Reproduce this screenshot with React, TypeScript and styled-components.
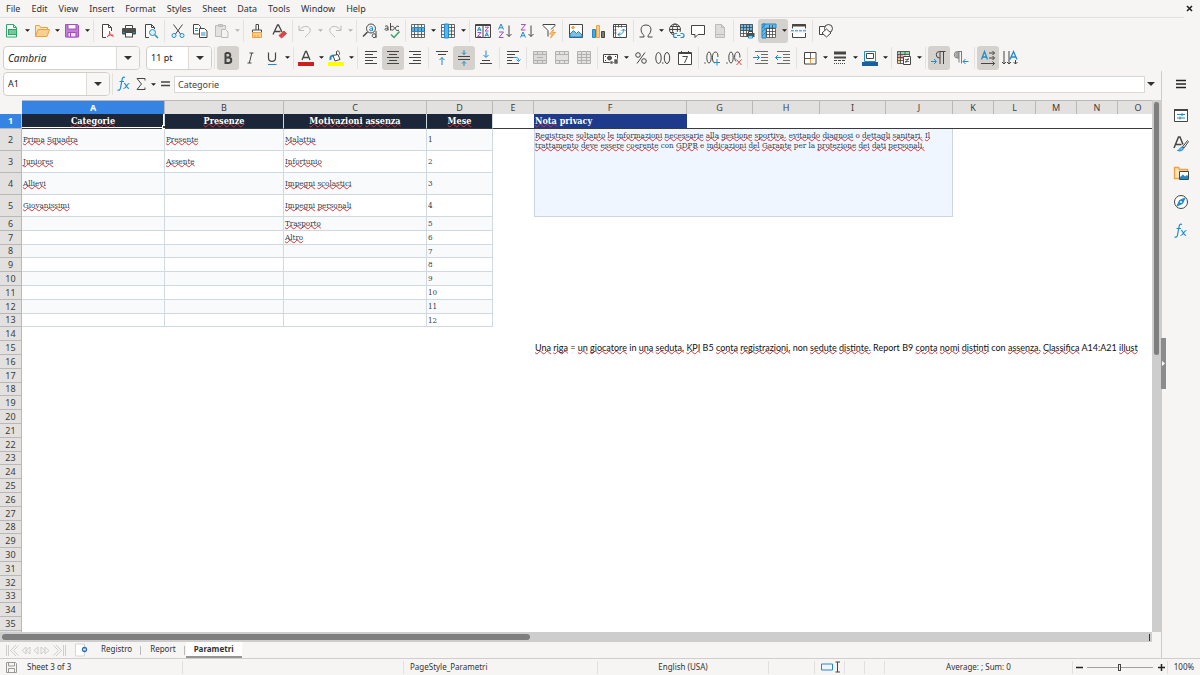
import React from "react";
import styled, { createGlobalStyle, css } from "styled-components";

const INK = "#454543";
const BLUE = "#1e8bcd";
const GREEN = "#2fa866";
const ORANGE = "#f0a13c";
const PURPLE = "#a44fbf";
const RED = "#e0433f";
const GREY = "#bdbbb8";
const UI = `"Noto Sans", "Open Sans", sans-serif`;
const SERIF = `"DejaVu Serif Condensed", "DejaVu Serif", serif`;

const Global = createGlobalStyle`
  *, *::before, *::after { box-sizing: border-box; }
  body { margin: 0; background: #f6f5f4; color: #333; font: 9px/12px ${UI}; overflow: hidden; }
  button, input { font: inherit; color: inherit; margin: 0; padding: 0; border: 0; background: none; }
  ul { list-style: none; margin: 0; padding: 0; }
`;

/* ---------- shell ---------- */
const Window = styled.div`
  display: flex;
  flex-direction: column;
  height: 100vh;
`;
const MenuBar = styled.nav`
  display: flex;
  align-items: center;
  height: 17px;
  padding: 0 6px;
`;
const MenuList = styled.ul`
  display: flex;
  gap: 11px;
  flex: 1;
`;
const MenuButton = styled.button`
  display: block;
`;
const CloseButton = styled.button`
  display: grid;
  place-items: center;
  width: 10px;
  height: 10px;
`;
const Toolbar = styled.div`
  display: flex;
  align-items: center;
  height: 27px;
`;
const MainToolbar = styled(Toolbar)`
  border-top: 1px solid #e3e1df;
  margin-right: 16px;
  padding: 0 0 1px 1px;
`;
const Separator = styled.span<{ $thin?: boolean }>`
  display: flex;
  justify-content: center;
  flex: none;
  width: ${(p) => (p.$thin ? 4 : 5)}px;
  height: 22px;
  &::before {
    content: "";
    width: 1px;
    background: #e4e2e0;
  }
`;
const activeTool = css`
  background: #d5d1cd;
`;
const ToolGroup = styled.span<{ $active?: boolean }>`
  display: flex;
  flex: none;
  border-radius: 3px;
  ${(p) => p.$active && activeTool}
`;
const ToolButton = styled.button<{ $active?: boolean }>`
  display: grid;
  place-items: center;
  flex: none;
  width: 22px;
  height: 24px;
  border-radius: 3px;
  ${(p) => p.$active && activeTool}
`;
const DropButton = styled.button<{ $dim?: boolean }>`
  display: grid;
  place-items: center;
  flex: none;
  width: 8px;
  height: 24px;
  color: ${(p) => (p.$dim ? "#b5b3b0" : "#1c1c1c")};
`;
const Combo = styled.div<{ $width: number }>`
  display: flex;
  flex: none;
  width: ${(p) => p.$width}px;
  height: 24px;
  border: 1px solid #d2cfcb;
  border-radius: 4px;
  background: #fff;
  overflow: hidden;
`;
const ComboInput = styled.input<{ $italic?: boolean }>`
  flex: 1;
  min-width: 0;
  padding: 0 4px;
  font-size: ${(p) => (p.$italic ? 10 : 9)}px;
  font-style: ${(p) => (p.$italic ? "italic" : "normal")};
  color: #222;
`;
const ComboArrow = styled.button`
  display: grid;
  place-items: center;
  width: 23px;
  border-left: 1px solid #dddad7;
  background: #f8f7f6;
`;
const ComboArrowPlain = styled.button`
  display: grid;
  place-items: center;
  width: 12px;
  height: 20px;
`;
const FormatToolbar = styled(Toolbar)`
  padding-left: 3px;
`;
const ComboGap = styled.span`
  flex: none;
  width: 6px;
`;

/* ---------- body ---------- */
const Body = styled.div`
  display: flex;
  flex: 1;
  min-height: 0;
`;
const Work = styled.div`
  display: flex;
  flex-direction: column;
  flex: 1;
  min-width: 0;
`;
const FormulaBar = styled.div`
  display: flex;
  align-items: center;
  height: 29px;
  padding: 0 4px 3px 3px;
`;
const FormulaInput = styled.input`
  flex: 1;
  min-width: 0;
  height: 17px;
  padding: 0 3px;
  border: 1px solid #dad8d6;
  background: #fff;
  color: #444;
`;
const SmallTool = styled.button`
  display: grid;
  place-items: center;
  width: 17px;
  height: 22px;
`;
const GridArea = styled.div`
  display: flex;
  flex: 1;
  min-height: 0;
`;
const Viewport = styled.div`
  flex: 1;
  min-width: 0;
  overflow: hidden;
  background: #fff;
`;
const Sheet = styled.table`
  width: 1159px;
  table-layout: fixed;
  border-collapse: separate;
  border-spacing: 0;
`;
const Row = styled.tr<{ $h: number }>`
  height: ${(p) => p.$h}px;
`;
const Corner = styled.td`
  padding: 0;
  background: #f6f5f4;
`;
const HeadCell = styled.th<{ $on?: boolean }>`
  padding: 0;
  font-weight: ${(p) => (p.$on ? 700 : 400)};
  color: ${(p) => (p.$on ? "#fff" : "#3c3c3c")};
  background: ${(p) => (p.$on ? "#3584e4" : "#e3e1df")};
  border: 0 solid #bab8b6;
  line-height: 12px;
`;
const ColHead = styled(HeadCell)`
  border-width: 1px 1px 0 0;
`;
const RowHead = styled(HeadCell)`
  border-width: 0 1px 1px 0;
`;
const Cell = styled.td`
  padding: 0;
  font: 8px/10px ${SERIF};
  color: #333d4b;
  white-space: nowrap;
`;
const TableCell = styled(Cell)<{ $band: boolean }>`
  padding: 1px 0 0 1px;
  background: ${(p) => (p.$band ? "#f8fafc" : "#fff")};
  border: 0 solid #d1d9e0;
  border-width: 0 1px 1px 0;
`;
const TitleCell = styled(Cell)<{ $selected?: boolean }>`
  position: relative;
  font: bold 9px/12px ${SERIF};
  text-align: center;
  color: #fff;
  background: #1b2638;
  border-right: 1px solid #d1d9e0;
  border-bottom: 1px solid #3b3b3b;
  ${(p) => p.$selected && css`box-shadow: inset -1px -1px 0 #fff;`}
`;
const FillHandle = styled.span`
  position: absolute;
  right: -2px;
  bottom: -1px;
  width: 4px;
  height: 4px;
  background: #3b3b3b;
  border: 1px solid #fff;
`;
const FrozenCell = styled(Cell)`
  border-bottom: 1px solid #3b3b3b;
`;
const NoteTitle = styled(FrozenCell)`
  padding-left: 1px;
  font: bold 9px/12px ${SERIF};
  color: #fff;
  background: #1e3a8a;
`;
const NoteCell = styled(Cell)`
  padding: 2px 0 0;
  vertical-align: top;
  background: #eff6ff;
  border: 0 solid #cdd6e0;
  border-width: 0 1px 1px 1px;
`;
const PlainCell = styled(Cell)`
  padding-left: 1px;
  font: 9px/12px Lato, "Open Sans", sans-serif;
  color: #111;
`;
const Misspelt = styled.span`
  text-decoration: underline wavy #e03030 1px;
  text-decoration-skip-ink: none;
  text-underline-offset: -1px;
`;

const VScroll = styled.div`
  width: 9px;
  padding: 2px 2px;
  background: #cdcdcd;
`;
const VThumb = styled.div`
  height: 48%;
  border-radius: 3px;
  background: #7e7e7e;
`;
const HScroll = styled.div`
  display: flex;
  align-items: center;
  height: 10px;
  margin-right: 9px;
  padding: 0 2px;
  background: #cdcdcd;
`;
const HThumb = styled.div`
  width: 46%;
  height: 6px;
  margin-right: auto;
  border-radius: 3px;
  background: #7e7e7e;
`;
const HEnd = styled.span`
  width: 1px;
  height: 7px;
  background: #333;
`;
const TabBar = styled.div`
  display: flex;
  align-items: center;
  height: 16px;
  padding-left: 5px;
  font-size: 8px;
`;
const AddTab = styled.button`
  display: grid;
  place-items: center;
  width: 12px;
  height: 15px;
  margin: 0 7px 0 8px;
`;
const Tab = styled.button<{ $current?: boolean }>`
  height: 16px;
  padding: 0 8px;
  border-bottom: 2px solid ${(p) => (p.$current ? "#949494" : "transparent")};
  background: ${(p) => (p.$current ? "#fff" : "none")};
  font-weight: ${(p) => (p.$current ? 700 : 400)};
`;
const TabRule = styled.span`
  width: 1px;
  height: 9px;
  margin-right: 1px;
  background: #bcbab8;
`;

const SideBar = styled.aside`
  position: relative;
  display: flex;
  flex-direction: column;
  align-items: center;
  gap: 7px;
  width: 39px;
  padding-top: 2px;
  border-left: 1px solid #cfcdcb;
`;
const SideButton = styled.button`
  display: grid;
  place-items: center;
  width: 26px;
  height: 22px;
  &:first-of-type {
    margin-bottom: 2px;
  }
`;
const SideHandle = styled.button`
  position: absolute;
  left: -1px;
  top: 267px;
  display: grid;
  place-items: center;
  width: 5px;
  height: 51px;
  background: #8c8c8c;
`;

const StatusBar = styled.footer`
  display: flex;
  align-items: center;
  height: 17px;
  border-top: 1px solid #d0cecc;
  font-size: 8px;
`;
const StatusCell = styled.div<{ $basis: number; $grow?: boolean; $start?: boolean }>`
  display: flex;
  align-items: center;
  justify-content: ${(p) => (p.$start ? "flex-start" : "center")};
  flex: ${(p) => (p.$grow ? 1 : 0)} 0 ${(p) => p.$basis}px;
  height: 13px;
  padding-left: ${(p) => (p.$start ? 6 : 0)}px;
  gap: ${(p) => (p.$start ? 10 : 4)}px;
  white-space: nowrap;
  & + & {
    border-left: 1px solid #e2e0de;
  }
`;
const ZoomButton = styled.button`
  display: grid;
  place-items: center;
  width: 8px;
  height: 12px;
`;
const ZoomSlider = styled.input`
  appearance: none;
  width: 66px;
  height: 12px;
  background: linear-gradient(#a3a1a0, #a3a1a0) center / 100% 1px no-repeat;
  &::-webkit-slider-thumb {
    appearance: none;
    width: 3px;
    height: 7px;
    border: 1px solid #444;
    background: #f6f5f4;
  }
`;

/* ---------- icons ---------- */
const Svg = styled.svg`
  display: block;
  flex: none;
  overflow: visible;
  fill: none;
  stroke: ${INK};
  stroke-width: 1;
`;
type IconProps = { children: React.ReactNode; w?: number; h?: number };
const Icon = ({ children, w = 16, h = 16 }: IconProps) => (
  <Svg width={w} height={h} viewBox={`0 0 ${w} ${h}`} aria-hidden="true">
    {children}
  </Svg>
);
const Caret = ({ big }: { big?: boolean }) => (
  <Svg width={big ? 8 : 5} height={big ? 4 : 3} viewBox="0 0 8 4" aria-hidden="true">
    <path d="M0 0h8L4 4z" fill="currentColor" stroke="none" />
  </Svg>
);

const lines = (rows: [number, number, number][], stroke = INK) =>
  rows.map(([x, x2, y]) => <path key={`${x}-${y}`} d={`M${x} ${y}H${x2}`} stroke={stroke} />);

const icons: Record<string, React.ReactNode> = {
  newSheet: (
    <Icon>
      <path d="M2.500 1.500h7l3 3v9.500h-10z" fill="#fff" stroke={GREEN} />
      <path d="M9.500 1.500v3h3" stroke={GREEN} />
      <rect x="4" y="6" width="9" height="6" fill={GREEN} stroke="none" />
      <path d="M5 8h7M5 10h7" stroke="#bfe8cd" />
    </Icon>
  ),
  open: (
    <Icon>
      <path d="M1.500 13.500v-11h4l1 2h7v3" fill="#fbe3bd" stroke={ORANGE} />
      <path d="M1.500 13.500l2.500-7h11.500l-2.500 7z" fill="#f9cf8f" stroke={ORANGE} />
    </Icon>
  ),
  save: (
    <Icon>
      <path d="M1.500 1.500h12l1 1v11.500h-13z" fill="#c27dd6" stroke={PURPLE} />
      <rect x="4" y="1.500" width="8" height="4.500" fill="#fff" stroke={PURPLE} />
      <rect x="4" y="9.500" width="8" height="4.500" fill="#f2e4f6" stroke={PURPLE} />
      <path d="M6.500 10v4" stroke={PURPLE} />
    </Icon>
  ),
  pdf: (
    <Icon>
      <path d="M7 14.500H3.500v-13h6l3 3V8" fill="#fff" />
      <path d="M9.500 1.500v3h3" />
      <path d="M8 14c2-1 3-3.500 2.500-6M10.500 9c.5 2 1.500 3.500 4 4.500M8.500 13c2-1 4-1.200 6-.8" stroke={RED} />
    </Icon>
  ),
  print: (
    <Icon>
      <path d="M4.500 5V2.500h7V5" fill="#fff" />
      <rect x="1" y="5" width="14" height="6.500" rx="1" fill="#4d4d4b" stroke="none" />
      <path d="M2 9.500h12" stroke={BLUE} />
      <rect x="4.500" y="9.500" width="7" height="4.500" fill="#fff" />
    </Icon>
  ),
  preview: (
    <Icon>
      <path d="M6 14.500H2.500v-13h6l3 3V6" fill="#fff" />
      <path d="M8.500 1.500v3h3" />
      <circle cx="9.500" cy="9.500" r="3" stroke={BLUE} fill="#dceffa" />
      <path d="M12 12l3 3" stroke={BLUE} strokeWidth="1.500" />
    </Icon>
  ),
  cut: (
    <Icon>
      <path d="M3.500 1.500l7 9.500M12.500 1.500l-7 9.500" />
      <circle cx="4" cy="12.500" r="2" stroke={BLUE} />
      <circle cx="12" cy="12.500" r="2" stroke={BLUE} />
    </Icon>
  ),
  copy: (
    <Icon>
      <path d="M1.500 1.500h5l2 2v7.500h-7z" fill="#fff" />
      <path d="M7.500 5.500h5l2.500 2.500v6.500h-7.500z" fill="#fff" />
      <path d="M3 5.500h3M3 7.500h3M9 10h4.500M9 12h4.500" stroke={BLUE} />
    </Icon>
  ),
  paste: (
    <Icon>
      <path d="M7 13.500H1.500v-11h10V6" fill="#e4e2e0" stroke={GREY} />
      <path d="M4.500 3.500v-2h4v2z" stroke={GREY} fill="#d0cecb" />
      <path d="M7.500 6.500h4l2.500 2.500v5.500H7.500z" fill="#f4f3f2" stroke={GREY} />
    </Icon>
  ),
  brush: (
    <Icon>
      <path d="M7 7V1.500h2.500V7M3.500 9.500V7h9v2.500" fill="#fff" />
      <path d="M3.500 9.500h9v5h-9z" fill="#f9d08e" stroke={ORANGE} />
      <path d="M6 14v-2M9 14v-2" stroke={ORANGE} />
    </Icon>
  ),
  clear: (
    <Icon>
      <path d="M2 11.500L6.500 2h1L11 9M3.500 8.500h6" strokeWidth="1.300" />
      <path d="M8 12.500l5-4.500 2.500 2.500-5 4.500z" fill={RED} stroke={RED} />
    </Icon>
  ),
  undo: (
    <Icon>
      <path d="M2 2.500v5h5M2.500 7C5 3.500 9.500 2 12.500 5c2.500 3-1 6-4.500 9" stroke={GREY} />
    </Icon>
  ),
  redo: (
    <Icon>
      <path d="M14 2.500v5H9M13.500 7C11 3.500 6.500 2 3.500 5 1 8 4.500 11 8 14" stroke={GREY} />
    </Icon>
  ),
  find: (
    <Icon>
      <circle cx="9" cy="5.500" r="4.500" />
      <path d="M5.500 9L1 13.500" strokeWidth="1.500" />
      <path d="M7.500 4.200c1-1 3-1 3 .6v3M10.500 5.800c-2-.2-3.200.2-3 1.200.3 1.200 2.500 1 3-.2" stroke={BLUE} />
      <path d="M14 8v7M14 12.500a1.900 1.900 0 1 0 0 .4" />
    </Icon>
  ),
  spell: (
    <Icon>
      <path d="M1 3.500c1-1 3-1 3 .6V7.500M4 5.200C2 5 .8 5.500 1 6.500c.3 1.200 2.500 1 3-.2M6.500 0v7.500M6.500 5a1.900 1.900 0 1 1 0 .4M15 3.600c-1.500-1-3.500-.4-3.500 1.700s2 2.800 3.500 1.800" />
      <path d="M7 11.500l3 3 5.500-6" stroke={GREEN} strokeWidth="1.500" />
    </Icon>
  ),
  rows: (
    <Icon>
      <path d="M1 4.500h14v4H1z" fill="#5fb3e6" stroke="none" />
      <path d="M1.500 1.500h13v13h-13zM1.500 4.500h13M1.500 8.500h13M1.500 11.500h13M4.500 1.500v13M8 1.500v13M11.500 1.500v13" strokeWidth=".8" />
      <path d="M1 4.500h14M1 8.500h14" stroke={BLUE} />
    </Icon>
  ),
  cols: (
    <Icon>
      <path d="M1.500 1.500h13v13h-13zM1.500 4.500h13M1.500 8h13M1.500 11.500h13M11.500 1.500v13" strokeWidth=".8" />
      <path d="M4.500 1h4v14h-4z" fill="#5fb3e6" stroke={BLUE} />
    </Icon>
  ),
  sort: (
    <Icon>
      <path d="M.5 1.500h15v13H.5zM8 1.500v13M.5 2.500h15" />
      <path d="M2.500 8l1.800-4L6 8M3 6.800h2.500M10 13.500l1.800-4 1.700 4M10.500 12.200H13" stroke={BLUE} />
      <path d="M2.500 9.500h3.500l-3.500 4H6M10 4.200h3.500L10 8h3.500" stroke={PURPLE} />
    </Icon>
  ),
  az: (
    <Icon>
      <path d="M1.500 6.500L4 1l2.500 5.500M2.300 4.800h3.400" stroke={BLUE} />
      <path d="M2 9h4.500L2 14.500h4.500" stroke={PURPLE} />
      <path d="M12 2.500v11M9.500 11l2.500 2.500L14.500 11" />
    </Icon>
  ),
  za: (
    <Icon>
      <path d="M1.500 14.500L4 9l2.500 5.500M2.300 12.800h3.400" stroke={BLUE} />
      <path d="M2 1.500h4.500L2 7h4.500" stroke={PURPLE} />
      <path d="M12 2.500v11M9.500 11l2.500 2.500L14.500 11" />
    </Icon>
  ),
  filter: (
    <Icon>
      <path d="M7 13.500V7.500L2 2.500v-1h12v1L10 6.500" fill="#fff" />
      <path d="M12.500 6.500L8.500 11h3l-2 4L14.500 9.500h-3z" fill="#fbd08f" stroke={ORANGE} />
    </Icon>
  ),
  image: (
    <Icon>
      <path d="M1.500 1.500h13v13h-13z" fill="#fff" />
      <path d="M2 14v-3l3.500-3.500 3 3 2-2L14 12v2z" fill="#7cc0ea" stroke={BLUE} />
      <circle cx="5" cy="4.500" r="1.200" fill={ORANGE} stroke={ORANGE} />
    </Icon>
  ),
  chart: (
    <Icon>
      <path d="M2.500 6.500h3v8h-3z" fill="#4ea7dd" stroke={BLUE} />
      <path d="M6.500 2.500h3v12h-3z" fill="#fbd08f" stroke={ORANGE} />
      <path d="M11.500 8.500h3v6h-3z" fill="#7a7a78" />
    </Icon>
  ),
  pivot: (
    <Icon>
      <path d="M1.500 1.500h13v13h-13z" fill="#fff" />
      <path d="M2 3.500h12M3.500 2v12M6.500 1.500v3M9.500 1.500v3M1.500 7h3M1.500 10h3" strokeWidth=".8" />
      <path d="M6 11.500c4 0 5.500-1.500 5.500-5M6 11.500l2-2M6 11.500l2 2M11.500 6l-2 2M11.500 6l2 2" stroke={BLUE} />
    </Icon>
  ),
  omega: (
    <Icon>
      <path d="M1.500 14h4.500v-1.500C2.500 10 1 2 8 2s5.500 8 2 10.500v1.500h4.500" />
    </Icon>
  ),
  link: (
    <Icon>
      <circle cx="7" cy="6.500" r="5.500" />
      <ellipse cx="7" cy="6.500" rx="2.500" ry="5.500" />
      <path d="M1.500 6.500h11M2.500 3.500h9M2.500 9.500h4" />
      <path d="M6 9h10v7H6z" fill="#f6f5f4" stroke="none" />
      <path d="M9 10.500H7.500a2 2 0 0 0 0 4H9M12.500 10.500H14a2 2 0 0 1 0 4h-1.500M9 12.500h3.500" stroke={BLUE} strokeWidth="1.200" />
    </Icon>
  ),
  comment: (
    <Icon>
      <path d="M1.500 2.500h13v9H8l-3 3v-3H1.500z" fill="#fff" />
    </Icon>
  ),
  footer: (
    <Icon>
      <path d="M3.500 1.500h6l3 3v10h-9z" fill="#dedcda" stroke={GREY} />
      <path d="M9.500 1.500v3h3M4 11.500h8" stroke={GREY} />
    </Icon>
  ),
  printRange: (
    <Icon>
      <path d="M1 1h13v7H1z" fill="#6db9e8" stroke="none" />
      <path d="M1.500 1.500h12v12h-12zM1.500 4.500h12M1.500 7.500h12M1.500 10.500h6M4.500 1.500v12M7.500 1.500v12M10.500 1.500v7" strokeWidth=".8" />
      <path d="M9.500 10V8.500h4V10" fill="#fff" />
      <path d="M8 10h7.500v4H8z" fill="#4d4d4b" stroke="none" />
      <path d="M9.500 13h4v2h-4z" fill="#fff" stroke={BLUE} />
    </Icon>
  ),
  freeze: (
    <Icon>
      <path d="M5 5h10v10H5z" fill="#fff" stroke="none" />
      <path d="M1 1h14v4H5v10H1z" fill="#6db9e8" stroke={BLUE} />
      <path d="M5.500 5.500h9v9h-9zM5.500 8.500h9M5.500 11.500h9M8.500 2v12.500M11.500 2v12.500" strokeWidth=".8" />
      <path d="M1 5l4-4M1 9l4-4M1 13l4-4M3 0v6" stroke={BLUE} />
    </Icon>
  ),
  split: (
    <Icon>
      <path d="M1.500 5.500v-4h13v4M1.500 10v4.500h13V10" fill="#fff" />
      <path d="M1 2.500h14" strokeWidth="2" />
      <path d="M0 7.800h16" stroke={BLUE} strokeDasharray="3 1" />
    </Icon>
  ),
  shapes: (
    <Icon>
      <path d="M1.500 3.500h6v8h-6z" fill="#fff" />
      <circle cx="10.500" cy="5.500" r="4" fill="#f6f5f4" />
      <path d="M8.500 6l4.500 4-4.500 4L4 10z" fill="#fff" />
    </Icon>
  ),
  bold: (
    <Icon>
      <path d="M5.500 3v10h3a2.700 2.700 0 0 0 0-5.500h-3M8.500 7.500A2.300 2.300 0 0 0 8.500 3h-3" strokeWidth="2" />
    </Icon>
  ),
  italic: (
    <Icon>
      <path d="M7.500 3h4M5.500 13h4M9.800 3L7.300 13" />
    </Icon>
  ),
  underline: (
    <Icon>
      <path d="M4.500 2.500V8c0 4.500 7 4.500 7 0V2.500" strokeWidth="1.200" />
      <path d="M4 14.500h8.500" stroke={BLUE} />
    </Icon>
  ),
  fontColor: (
    <Icon>
      <path d="M4 10L7.500 1.500h1L12 10M5.200 7.500h5.600" strokeWidth="1.300" />
      <path d="M0 12h16v4H0z" fill="#c9211e" stroke="none" />
    </Icon>
  ),
  highlight: (
    <Icon>
      <path d="M5 5.500l5-1 2 5-5 1.500zM8.500 5V1.500c2-1.500 3 0 3 3" fill="#fff" />
      <path d="M2.500 10c-.5-3 .5-4.500 3-4.500" stroke={BLUE} strokeWidth="2" />
      <path d="M0 12h16v4H0z" fill="#ffff00" stroke="none" />
    </Icon>
  ),
  left: <Icon>{lines([[2, 14, 1.5], [2, 10, 4.5], [2, 14, 7.5], [2, 10, 10.5], [2, 14, 13.5]])}</Icon>,
  center: <Icon>{lines([[2, 14, 1.5], [4, 12, 4.5], [2, 14, 7.5], [4, 12, 10.5], [2, 14, 13.5]])}</Icon>,
  right: <Icon>{lines([[2, 14, 1.5], [6, 14, 4.5], [2, 14, 7.5], [6, 14, 10.5], [2, 14, 13.5]])}</Icon>,
  top: (
    <Icon>
      {lines([[2, 14, 1.5], [4, 12, 4.5]])}
      <path d="M8 15V7.500M5.500 10L8 7.500l2.500 2.500" stroke={BLUE} />
    </Icon>
  ),
  middle: (
    <Icon>
      {lines([[2, 14, 6.5], [2, 14, 9.5]])}
      <path d="M8 0v4.500M6 2.500l2 2 2-2M8 16v-4.500M6 13.500l2-2 2 2" stroke={BLUE} />
    </Icon>
  ),
  bottom: (
    <Icon>
      {lines([[4, 12, 10.5], [2, 14, 13.5]])}
      <path d="M8 .5V7M5.500 5L8 7.500 10.500 5" stroke={BLUE} />
    </Icon>
  ),
  wrap: (
    <Icon>
      {lines([[2, 14, 1.5], [2, 10, 4.5], [2, 7, 10.5], [2, 14, 13.5], [2, 8, 7.5]])}
      <path d="M8 7.500h3.500c1.500 0 2 1 2 3M11.500 9.500l2 2 2-2" stroke={BLUE} />
    </Icon>
  ),
  merge: (
    <Icon>
      <path d="M1.500 1.500h13v12h-13z" fill="#dcdad8" stroke="#b3b1ae" />
      <path d="M1.500 4.500h13M1.500 10.500h13M5.500 1.500v3M10.500 1.500v3M5.500 10.500v3M10.500 10.500v3M5 7.500h6" stroke="#b3b1ae" />
    </Icon>
  ),
  mergeCells: (
    <Icon>
      <path d="M1.500 1.500h13v12h-13z" fill="#e4e2e0" stroke="#b3b1ae" />
      <path d="M1.500 4.500h13M1.500 10.500h13M5.500 1.500v3M10.500 1.500v3M5.500 10.500v3M10.500 10.500v3" stroke="#b3b1ae" />
    </Icon>
  ),
  unmerge: (
    <Icon>
      <path d="M1.500 1.500h13v12h-13z" fill="#e4e2e0" stroke="#b3b1ae" />
      <path d="M1.500 4.500h13M1.500 10.500h13M5.500 1.500v12M10.500 1.500v12M1.500 7.500h13" stroke="#b3b1ae" />
    </Icon>
  ),
  currency: (
    <Icon>
      <path d="M.5 4.500h14v8H.5z" fill="#fff" />
      <circle cx="6.500" cy="8" r="2" fill="#5a5a58" />
      <path d="M2 6.500h1M12 6.500h1M2 10.500h1" />
      <path d="M7 11h3v3H7zM11 9h4v5h-4z" fill="#5a5a58" stroke="#f6f5f4" strokeWidth=".6" />
    </Icon>
  ),
  percent: (
    <Icon>
      <circle cx="5" cy="5" r="2.300" />
      <circle cx="11" cy="11" r="2.300" />
      <path d="M12 2.500L4 13.500" />
    </Icon>
  ),
  number: (
    <Icon>
      <ellipse cx="3.500" cy="8" rx="2.700" ry="5.500" />
      <ellipse cx="12" cy="8" rx="2.700" ry="5.500" />
      <path d="M7.300 13h1" strokeWidth="1.300" />
    </Icon>
  ),
  date: (
    <Icon>
      <path d="M1.500 2.500h13v12h-13zM1.500 3.500h13M4.500 1v2M11.500 1v2" fill="#fff" />
      <path d="M5.500 6.500h5l-3 6.500" />
    </Icon>
  ),
  addDecimal: (
    <Icon>
      <path d="M.5 13h1" strokeWidth="1.300" />
      <ellipse cx="5" cy="7.500" rx="2.200" ry="5.500" />
      <path d="M10.500 13c-3-1-3-11 1-11 2 0 2.500 2.500 2.400 5" />
      <path d="M13 9v6.500M10 12.500h6" stroke={BLUE} />
    </Icon>
  ),
  removeDecimal: (
    <Icon>
      <path d="M.5 13h1" strokeWidth="1.300" />
      <ellipse cx="5" cy="7.500" rx="2.200" ry="5.500" />
      <path d="M10 11.500c-2-2-2-9.500 1.500-9.500 2 0 2.500 2.500 2.400 5.500" />
      <path d="M10.500 9.500l5 5.500M15.500 9.500l-5 5.500" stroke={RED} />
    </Icon>
  ),
  indent: (
    <Icon>
      {lines([[2, 15, 1.5], [8, 15, 4.5], [8, 15, 7.5], [8, 15, 10.5], [2, 15, 13.5]], "#6b6b69")}
      <path d="M0 7.500h6M4 5l2.500 2.500L4 10" stroke={BLUE} />
    </Icon>
  ),
  outdent: (
    <Icon>
      {lines([[2, 15, 1.5], [8, 15, 4.5], [8, 15, 7.5], [8, 15, 10.5], [2, 15, 13.5]], "#6b6b69")}
      <path d="M.5 7.500h6M3 5L.5 7.500 3 10" stroke={BLUE} />
    </Icon>
  ),
  borders: (
    <Icon>
      <path d="M2.500 2.500h11.500v11.500H2.500z" fill="#fff" />
      <path d="M8.500 8v5.500M8 8.500h5.500M3 8.500h5" stroke={ORANGE} />
      <path d="M8.500 2.500v6h-6" strokeWidth=".8" />
    </Icon>
  ),
  borderStyle: (
    <Icon>
      <path d="M2 3h12" strokeWidth="3" />
      <path d="M2 7.500h12" strokeWidth="2" />
      <path d="M2 10.500h12" strokeDasharray="3 1" />
      <path d="M2 13.500h12" strokeDasharray="1 1" />
    </Icon>
  ),
  borderColor: (
    <Icon>
      <path d="M2.500 1.500h11v10h-11z" fill="#fff" stroke={BLUE} />
      <path d="M4.500 3.500h7v5h-7z" />
      <path d="M0 12h16v4H0z" fill="#1a5fa0" stroke="none" />
    </Icon>
  ),
  conditional: (
    <Icon>
      <path d="M1 1h13v4H1z" fill="#8fd6a8" stroke="none" />
      <path d="M1 5h6v4H1z" fill="#f2a19f" stroke="none" />
      <path d="M1 9h4v4H1z" fill="#fbd08f" stroke="none" />
      <path d="M7 13.500H1.500v-12h12V6M1.500 4.500h12M1.500 7.500H7M1.500 10.500H7M4.500 1.500v12M9 1.500v4" strokeWidth=".8" />
      <path d="M7.500 6.500h7v8h-7z" fill="#fff" />
      <path d="M9 9.500h4M9 11.500h4M12.500 8l-3 5" strokeWidth=".8" />
    </Icon>
  ),
  ltr: (
    <Icon>
      <path d="M14.500 1.500H8.500a3 3 0 0 0 0 6.500h.5M9 1.500V14M12.500 1.500V14" />
      <path d="M0 11.500h5M3 9l2.500 2.500L3 14" stroke={BLUE} />
    </Icon>
  ),
  rtl: (
    <Icon>
      <path d="M3 2h3v6H3.500L2 5z" fill="#a5a5a3" stroke="none" />
      <path d="M9 1.500H4.500a3 3 0 0 0 0 6.500H6M6 1.500v11M8.500 1.500v12" stroke="#7b7b79" />
      <path d="M10 11.500h5.500M12.500 9L10 11.500l2.500 2.500" stroke={BLUE} />
    </Icon>
  ),
  textLtr: (
    <Icon>
      <path d="M1.500 9.500L4.500 1.500 7.500 9.500M2.500 7h4" stroke={BLUE} strokeWidth="1.300" />
      <path d="M9 3h5.500M12.500 1l2 2-2 2M9 8h5.500M12.500 6l2 2-2 2M1 13.500h13.500M12.500 11.500l2 2-2 2" />
    </Icon>
  ),
  textTtb: (
    <Icon>
      <path d="M8 9.500l3.500-8 3.500 8M9 7h5" stroke={BLUE} strokeWidth="1.300" />
      <path d="M2 1v13M0 12l2 2 2-2M7 1v13M5 12l2 2 2-2M13.500 10v4M11.500 12l2 2 2-2" />
    </Icon>
  ),
  fx: (
    <Icon>
      <path d="M9 1.500C7 .5 6.300 2 6 4L4.500 12c-.4 2-1.500 2.500-3 2M3.500 5.500h4.500" stroke={BLUE} strokeWidth="1.200" />
      <path d="M8 7.500c2-.8 2.500 5.500 5 4.800M13.500 7.500c-2.500-.5-3.500 5.500-6 5" stroke={BLUE} strokeWidth="1.200" />
    </Icon>
  ),
  sigma: (
    <Icon w={10} h={14}>
      <path d="M9 3.500v-2H1L5.500 7 1 12.500h8v-2" />
    </Icon>
  ),
  equals: (
    <Icon w={9} h={8}>
      <path d="M0 2h9M0 5.500h9" strokeWidth="1.500" />
    </Icon>
  ),
  menu: (
    <Icon w={10} h={10}>
      <path d="M0 1.500h10M0 5h10M0 8.500h10" stroke="#222" strokeWidth="1.400" />
    </Icon>
  ),
  properties: (
    <Icon>
      <path d="M1.500 2.500h13v12h-13z" fill="#fff" />
      <path d="M1 3h14" strokeWidth="2" />
      <path d="M4 7.500h8M4 11h8M9 6v3M7 9.500v3" stroke={BLUE} />
    </Icon>
  ),
  styles: (
    <Icon>
      <path d="M1 12L5.500 1h1.500l3 7.500M2.500 8.500h6" strokeWidth="1.500" />
      <path d="M9.500 11L14.500 4.500l1 1L11 12z" fill="#fff" />
      <path d="M4.500 14.500c2.500 0 2-3 4.500-3.500l1.500 1.500c-.5 2-3 3-6 2z" fill="#6db9e8" stroke={BLUE} />
    </Icon>
  ),
  gallery: (
    <Icon>
      <path d="M1.500 13.500v-11h4l1 2h8v9z" fill="#fbe3bd" stroke={ORANGE} strokeWidth="1.400" />
      <path d="M6.500 6.500h9v8h-9z" fill="#fff" />
      <path d="M7 14v-2l3-2.500 2 2 2-1.500 1 1v3z" fill={BLUE} stroke="none" />
    </Icon>
  ),
  navigator: (
    <Icon>
      <circle cx="8" cy="8" r="6.500" fill="#fff" />
      <path d="M12 4L9.500 9.500 4 12l2.500-5.500z" fill={BLUE} stroke={BLUE} />
      <circle cx="8" cy="8" r="1" fill="#fff" stroke="none" />
    </Icon>
  ),
  navArrows: (
    <Icon w={61} h={14}>
      <path
        d="M1.500 2v11M3.500 2v11M11 2L5.500 7.500 11 13M13.500 2.500L8.500 7.500l5 5M21 4l-4 3.500 4 3.500zM25 4l-4 3.500 4 3.500zM33 4l-4 3.500 4 3.500zM40 4l4 3.500-4 3.500zM36 4l4 3.500-4 3.500zM48.500 2.500l5 5-5 5M51 2l5.500 5.500L51 13M58.500 2v11M60.500 2v11"
        stroke="#cbc9c7"
        strokeWidth=".9"
      />
    </Icon>
  ),
  addSheet: (
    <Icon w={14} h={14}>
      <path d="M1.500 1h9v12h-9z" fill="#fff" stroke="#d8d6d4" />
      <circle cx="10.500" cy="6.500" r="2" stroke="#2a6fc0" strokeWidth="1.300" />
    </Icon>
  ),
  saveState: (
    <Icon w={11} h={11}>
      <path d="M.5.5h9l1 1v9H.5zM2.500.5v3.500h6V.5M2.500 10.500V6.500h6v4" stroke="#9a9896" />
    </Icon>
  ),
  selection: (
    <Icon w={20} h={12}>
      <path d="M1.500 3h11v6h-11z" stroke={BLUE} />
      <path d="M15.500 1h4.500M15.500 11h4.500M17.500 1v10" stroke="#444" />
    </Icon>
  ),
};

/* ---------- toolbars ---------- */
type Tool = { icon: string; label: string; drop?: boolean; dim?: boolean; active?: boolean };
type Item = Tool | "|" | "!";
const t = (icon: string, label: string, flags = ""): Tool => ({
  icon,
  label,
  drop: flags.includes("v"),
  dim: flags.includes("d"),
  active: flags.includes("a"),
});

const standardTools: Item[] = [
  t("newSheet", "New", "v"), t("open", "Open", "v"), t("save", "Save", "v"), "|",
  t("pdf", "Export as PDF"), t("print", "Print"), t("preview", "Print preview"), "|",
  t("cut", "Cut"), t("copy", "Copy"), t("paste", "Paste", "vd"), "|",
  t("brush", "Clone formatting"), t("clear", "Clear formatting"), "!",
  t("undo", "Undo", "vd"), t("redo", "Redo", "vd"), "|",
  t("find", "Find and replace"), t("spell", "Spelling"), "!",
  t("rows", "Row", "v"), t("cols", "Column", "v"), "|",
  t("sort", "Sort"), t("az", "Sort ascending"), t("za", "Sort descending"), t("filter", "AutoFilter"), "|",
  t("image", "Insert image"), t("chart", "Insert chart"), t("pivot", "Pivot table"), "!",
  t("omega", "Special character", "v"), t("link", "Hyperlink"), t("comment", "Comment"), t("footer", "Headers and footers"), "|",
  t("printRange", "Print area"), t("freeze", "Freeze rows and columns", "va"), t("split", "Split window"), "|",
  t("shapes", "Draw functions"),
];
const formatTools: Item[] = [
  t("bold", "Bold", "a"), t("italic", "Italic"), t("underline", "Underline", "v"), "!",
  t("fontColor", "Font color", "v"), t("highlight", "Background color", "v"), "|",
  t("left", "Align left"), t("center", "Align center", "a"), t("right", "Align right"), "|",
  t("top", "Align top"), t("middle", "Center vertically", "a"), t("bottom", "Align bottom"), "|",
  t("wrap", "Wrap text"), "|",
  t("merge", "Merge and center"), t("mergeCells", "Merge cells"), t("unmerge", "Unmerge cells"), "|",
  t("currency", "Currency", "v"), t("percent", "Percent"), t("number", "Number"), t("date", "Date"), "|",
  t("addDecimal", "Add decimal place"), t("removeDecimal", "Delete decimal place"), "|",
  t("indent", "Increase indent"), t("outdent", "Decrease indent"), "|",
  t("borders", "Borders", "v"), t("borderStyle", "Border style", "v"), t("borderColor", "Border color", "v"), "!",
  t("conditional", "Conditional formatting", "v"), "|",
  t("ltr", "Left-to-right", "a"), t("rtl", "Right-to-left"), "|",
  t("textLtr", "Text direction from left to right", "a"), t("textTtb", "Text direction from top to bottom"),
];

const Tools = ({ items }: { items: Item[] }) => (
  <>
    {items.map((item, i) => {
      if (item === "|" || item === "!") return <Separator key={i} $thin={item === "!"} />;
      if (!item.drop)
        return (
          <ToolButton key={i} aria-label={item.label} $active={item.active}>
            {icons[item.icon]}
          </ToolButton>
        );
      return (
        <ToolGroup key={i} $active={item.active}>
          <ToolButton aria-label={item.label}>{icons[item.icon]}</ToolButton>
          <DropButton aria-label={`${item.label} options`} $dim={item.dim}>
            <Caret />
          </DropButton>
        </ToolGroup>
      );
    })}
  </>
);

/* ---------- sheet data ---------- */
const columns: [string, number][] = [
  ["A", 143], ["B", 119], ["C", 143], ["D", 66], ["E", 41], ["F", 153], ["G", 66], ["H", 67],
  ["I", 66], ["J", 67], ["K", 41], ["L", 42], ["M", 41], ["N", 41], ["O", 41],
];
const titles = ["Categorie", "Presenze", "Motivazioni assenza", "Mese"];
const records: [string, string, string][] = [
  ["Prima Squadra", "Presente", "Malattia"],
  ["Juniores", "Assente", "Infortunio"],
  ["Allievi", "", "Impegni scolastici"],
  ["Giovanissimi", "", "Impegni personali"],
  ["", "", "Trasporto"],
  ["", "", "Altro"],
  ["", "", ""], ["", "", ""], ["", "", ""], ["", "", ""], ["", "", ""], ["", "", ""],
];
const noteLines = [
  "Registrare soltanto le informazioni necessarie alla gestione sportiva, evitando diagnosi o dettagli sanitari. Il",
  "trattamento deve essere coerente con GDPR e indicazioni del Garante per la protezione dei dati personali.",
];
const remark =
  "Una riga = un giocatore in una seduta. KPI B5 conta registrazioni, non sedute distinte. Report B9 conta nomi distinti con assenza. Classifica A14:A21 illust";

const known = new Set(["=", "in", "B5", "non", "Report", "B9", "con", "A14:A21", "o", "e", "per", "la", "privacy"]);
const Checked = ({ text }: { text: string }) => (
  <>
    {text.split(" ").map((word, i) => (
      <React.Fragment key={i}>
        {i > 0 && " "}
        {known.has(word) || !word ? word : <Misspelt>{word}</Misspelt>}
      </React.Fragment>
    ))}
  </>
);

const rowHeight = (n: number) => (n <= 5 ? 22 : n % 5 === 3 ? 13 : 14);
const laterRows = Array.from({ length: 22 }, (_, i) => i + 14);

const SheetTable = () => (
  <Sheet>
    <colgroup>
      <col style={{ width: 22 }} />
      {columns.map(([name, width]) => (
        <col key={name} style={{ width }} />
      ))}
    </colgroup>
    <thead>
      <Row $h={14}>
        <Corner />
        {columns.map(([name]) => (
          <ColHead key={name} scope="col" $on={name === "A"}>
            {name}
          </ColHead>
        ))}
      </Row>
    </thead>
    <tbody>
      <Row $h={15}>
        <RowHead scope="row" $on>
          1
        </RowHead>
        {titles.map((title, i) => (
          <TitleCell key={title} $selected={i === 0}>
            <Checked text={title} />
            {i === 0 && <FillHandle />}
          </TitleCell>
        ))}
        <FrozenCell />
        <NoteTitle>
          <Checked text="Nota privacy" />
        </NoteTitle>
        <FrozenCell colSpan={9} />
      </Row>
      {records.map((record, i) => (
        <Row key={i} $h={rowHeight(i + 2)}>
          <RowHead scope="row">{i + 2}</RowHead>
          {record.map((value, c) => (
            <TableCell key={c} $band={i % 2 === 0}>
              <Checked text={value} />
            </TableCell>
          ))}
          <TableCell $band={i % 2 === 0}>{i + 1}</TableCell>
          <Cell />
          {i === 0 && (
            <NoteCell colSpan={5} rowSpan={4}>
              {noteLines.map((line) => (
                <div key={line}>
                  <Checked text={line} />
                </div>
              ))}
            </NoteCell>
          )}
        </Row>
      ))}
      {laterRows.map((n) => (
        <Row key={n} $h={rowHeight(n)}>
          <RowHead scope="row">{n}</RowHead>
          {n === 15 && (
            <>
              <Cell colSpan={5} />
              <PlainCell colSpan={10}>
                <Checked text={remark} />
              </PlainCell>
            </>
          )}
        </Row>
      ))}
      <Row $h={14}>
        <RowHead />
      </Row>
    </tbody>
  </Sheet>
);

const menus = ["File", "Edit", "View", "Insert", "Format", "Styles", "Sheet", "Data", "Tools", "Window", "Help"];
const panels: [string, string][] = [
  ["menu", "Sidebar settings"],
  ["properties", "Properties"],
  ["styles", "Styles"],
  ["gallery", "Gallery"],
  ["navigator", "Navigator"],
  ["fx", "Functions"],
];

export default function App() {
  return (
    <Window>
      <Global />
      <MenuBar>
        <MenuList>
          {menus.map((name) => (
            <li key={name}>
              <MenuButton>{name}</MenuButton>
            </li>
          ))}
        </MenuList>
        <CloseButton aria-label="Close document">
          <Icon w={7} h={7}>
            <path d="M1 1l5 5M6 1L1 6" stroke="#222" strokeWidth="1.600" />
          </Icon>
        </CloseButton>
      </MenuBar>
      <MainToolbar>
        <Tools items={standardTools} />
      </MainToolbar>
      <FormatToolbar>
        <Combo $width={137}>
          <ComboInput aria-label="Font name" defaultValue="Cambria" $italic />
          <ComboArrow aria-label="Font list">
            <Caret big />
          </ComboArrow>
        </Combo>
        <ComboGap />
        <Combo $width={66}>
          <ComboInput aria-label="Font size" defaultValue="11 pt" />
          <ComboArrow aria-label="Size list">
            <Caret big />
          </ComboArrow>
        </Combo>
        <Separator />
        <Tools items={formatTools} />
      </FormatToolbar>
      <Body>
        <Work>
          <FormulaBar>
            <Combo $width={107}>
              <ComboInput aria-label="Name box" defaultValue="A1" />
              <ComboArrow aria-label="Names">
                <Caret big />
              </ComboArrow>
            </Combo>
            <Separator />
            <SmallTool aria-label="Function wizard">{icons.fx}</SmallTool>
            <SmallTool aria-label="Select function">{icons.sigma}</SmallTool>
            <DropButton aria-label="Function options">
              <Caret />
            </DropButton>
            <SmallTool aria-label="Formula">{icons.equals}</SmallTool>
            <FormulaInput aria-label="Input line" defaultValue="Categorie" />
            <ComboArrowPlain aria-label="Expand formula bar">
              <Caret big />
            </ComboArrowPlain>
          </FormulaBar>
          <GridArea>
            <Viewport>
              <SheetTable />
            </Viewport>
            <VScroll>
              <VThumb />
            </VScroll>
          </GridArea>
          <HScroll>
            <HThumb />
            <HEnd />
          </HScroll>
          <TabBar>
            {icons.navArrows}
            <AddTab aria-label="Add sheet">{icons.addSheet}</AddTab>
            <Tab>Registro</Tab>
            <TabRule />
            <Tab>Report</Tab>
            <TabRule />
            <Tab $current>Parametri</Tab>
          </TabBar>
        </Work>
        <SideBar>
          {panels.map(([icon, label]) => (
            <SideButton key={icon} aria-label={label}>
              {icons[icon]}
            </SideButton>
          ))}
          <SideHandle aria-label="Hide sidebar">
            <Icon w={3} h={5}>
              <path d="M0 0l3 2.500L0 5z" fill="#fff" stroke="none" />
            </Icon>
          </SideHandle>
        </SideBar>
      </Body>
      <StatusBar>
        <StatusCell $basis={182} $start>
          {icons.saveState}
          Sheet 3 of 3
        </StatusCell>
        <StatusCell $basis={221} />
        <StatusCell $basis={194} $grow $start>
          PageStyle_Parametri
        </StatusCell>
        <StatusCell $basis={171}>English (USA)</StatusCell>
        <StatusCell $basis={46} />
        <StatusCell $basis={30}>{icons.selection}</StatusCell>
        <StatusCell $basis={20} />
        <StatusCell $basis={20} />
        <StatusCell $basis={188}>Average: ; Sum: 0</StatusCell>
        <StatusCell $basis={95}>
          <ZoomButton aria-label="Zoom out">
            <Icon w={7} h={7}>
              <path d="M0 3.500h7" stroke="#222" strokeWidth="1.500" />
            </Icon>
          </ZoomButton>
          <ZoomSlider type="range" aria-label="Zoom" min={0} max={100} defaultValue={49} />
          <ZoomButton aria-label="Zoom in">
            <Icon w={7} h={7}>
              <path d="M0 3.500h7M3.500 0v7" stroke="#222" strokeWidth="1.500" />
            </Icon>
          </ZoomButton>
        </StatusCell>
        <StatusCell $basis={33}>100%</StatusCell>
      </StatusBar>
    </Window>
  );
}
